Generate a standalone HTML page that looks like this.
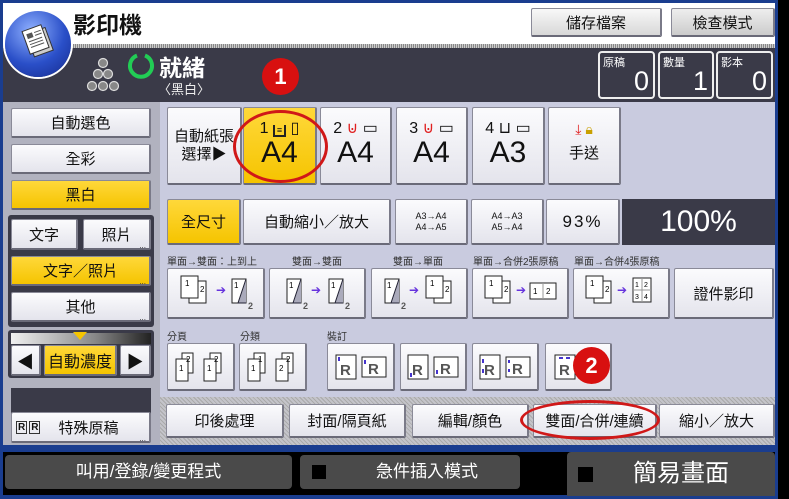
<!DOCTYPE html>
<html><head><meta charset="utf-8"><style>
*{margin:0;padding:0;box-sizing:border-box}
body{width:789px;height:499px;overflow:hidden;background:#000;font-family:"Liberation Sans","Noto Sans CJK TC",sans-serif;position:relative}
.a{position:absolute}
.b{position:absolute;background:linear-gradient(#fbfbfd,#e4e4ec);border:1px solid #8a8a98;border-bottom:2px solid #6a6a78;border-right:2px solid #7a7a88;display:flex;align-items:center;justify-content:center;font-size:15px;color:#111;border-radius:2px}
.y{background:linear-gradient(#ffd83a,#f5c400)}
.lb{position:absolute;font-size:10px;color:#333}
.dots::after{content:"...";position:absolute;right:3px;bottom:-2px;font-size:8px;color:#333}
.cnt{position:absolute;border:2px solid #eee;border-radius:4px;color:#fff;top:51px;height:48px}
.cnt span{position:absolute;left:3px;top:1px;font-size:11px}
.cnt b{position:absolute;right:4px;bottom:0;font-size:27px;font-weight:normal}
svg{display:block}
</style></head><body>
<!-- frame -->
<div class="a" style="left:0;top:0;width:778px;height:452px;background:#1a3d8f"></div>
<div class="a" style="left:3px;top:3px;width:772px;height:41px;background:#fff"></div>
<div class="a" style="left:3px;top:44px;width:772px;height:4px;background:repeating-linear-gradient(90deg,#888 0 1px,#ccc 1px 2px)"></div>
<div class="a" style="left:73px;top:6px;font-size:23px;font-weight:bold;color:#111">影印機</div>
<div class="b" style="left:531px;top:8px;width:131px;height:29px;background:linear-gradient(#f8f8f8,#d8d8d8)">儲存檔案</div>
<div class="b" style="left:671px;top:8px;width:104px;height:29px;background:linear-gradient(#eee,#ccc)">檢查模式</div>
<!-- status -->
<div class="a" style="left:3px;top:48px;width:772px;height:54px;background:#3a3a48"></div>
<div class="a" style="left:5px;top:11px;width:66px;height:66px;border-radius:50%;background:radial-gradient(circle at 40% 30%,#8fb0ff,#2a4fc8 55%,#14288a);box-shadow:0 0 0 2px #fff"></div>
<svg class="a" style="left:20px;top:20px" width="40" height="40" viewBox="0 0 40 40"><g transform="rotate(-20 20 20)"><rect x="9" y="10" width="20" height="24" fill="#ccc" stroke="#333"/><rect x="6" y="6" width="20" height="24" fill="#fff" stroke="#333"/><rect x="9" y="10" width="6" height="5" fill="#555"/><path d="M17 11h7M17 14h7M9 18h14M9 21h14M9 24h14" stroke="#555"/></g></svg>
<svg class="a" style="left:86px;top:57px" width="34" height="40"><g fill="#888" stroke="#ddd" stroke-width="1.2"><circle cx="17" cy="6" r="4.5"/><circle cx="12" cy="17" r="4.5"/><circle cx="22" cy="17" r="4.5"/><circle cx="6" cy="29" r="4.5"/><circle cx="17" cy="29" r="4.5"/><circle cx="28" cy="29" r="4.5"/></g></svg>
<svg class="a" style="left:127px;top:52px" width="28" height="28"><path d="M10 3.5A11 11 0 1 0 18 3.5" fill="none" stroke="#22cc55" stroke-width="4"/></svg>
<div class="a" style="left:159px;top:49px;font-size:23px;color:#fff;font-weight:bold">就緒</div>
<div class="a" style="left:158px;top:79px;font-size:13px;color:#eee">〈黑白〉</div>
<div class="a" style="left:262px;top:58px;width:37px;height:37px;border-radius:50%;background:#d81010;color:#fff;font-size:22px;font-weight:bold;text-align:center;line-height:37px">1</div>
<div class="cnt" style="left:598px;width:57px"><span>原稿</span><b>0</b></div>
<div class="cnt" style="left:658px;width:56px"><span>數量</span><b>1</b></div>
<div class="cnt" style="left:716px;width:57px"><span>影本</span><b>0</b></div>
<!-- main bgs -->
<div class="a" style="left:3px;top:102px;width:157px;height:343px;background:#b1b2bf"></div>
<div class="a" style="left:160px;top:102px;width:615px;height:295px;background:#c9cbdf"></div>
<div class="a" style="left:160px;top:397px;width:615px;height:48px;background:repeating-linear-gradient(45deg,#aaa 0 1px,#c4c4ca 1px 3px)"></div>
<!-- left -->
<div class="b" style="left:11px;top:108px;width:140px;height:30px">自動選色</div>
<div class="b" style="left:11px;top:144px;width:140px;height:30px">全彩</div>
<div class="b y" style="left:11px;top:180px;width:140px;height:30px">黑白</div>
<div class="a" style="left:8px;top:215px;width:146px;height:112px;background:#3a3a48;border-radius:3px"></div>
<div class="b" style="left:11px;top:219px;width:67px;height:31px">文字</div>
<div class="b dots" style="left:83px;top:219px;width:68px;height:31px">照片</div>
<div class="b y dots" style="left:11px;top:256px;width:140px;height:30px">文字／照片</div>
<div class="b dots" style="left:11px;top:292px;width:140px;height:30px">其他</div>
<div class="a" style="left:8px;top:330px;width:146px;height:48px;background:#3a3a48;border-radius:3px"></div>
<div class="a" style="left:11px;top:333px;width:140px;height:11px;background:linear-gradient(90deg,#f0f0f0,#888 60%,#222)"></div>
<div class="a" style="left:73px;top:332px;width:0;height:0;border-left:7px solid transparent;border-right:7px solid transparent;border-top:8px solid #f5c400"></div>
<div class="b" style="left:11px;top:345px;width:30px;height:31px;font-size:17px">◀</div>
<div class="b y" style="left:44px;top:345px;width:73px;height:31px;font-size:16px">自動濃度</div>
<div class="b" style="left:120px;top:345px;width:31px;height:31px;font-size:17px">▶</div>
<div class="a" style="left:11px;top:388px;width:140px;height:26px;background:#3a3a48"></div>
<div class="b dots" style="left:11px;top:412px;width:140px;height:31px;justify-content:flex-start;padding-left:4px"><span style="font-size:10px;border:1px solid #333;padding:0 1px;font-weight:bold">R</span><span style="font-size:10px;border:1px solid #333;padding:0 1px;font-weight:bold;margin-left:2px">R</span><span style="margin-left:18px">特殊原稿</span></div>
<!-- paper row -->
<div class="b" style="left:167px;top:107px;width:75px;height:78px;font-size:15px;line-height:18px;text-align:center">自動紙張<br>選擇▶</div>
<div class="b y" style="left:243px;top:107px;width:74px;height:78px;flex-direction:column"><div style="font-size:16px;margin-top:-6px">1 <span style="border:2px solid #222;border-top:none;font-size:9px;padding:0 2px">≡</span> ▯</div><div style="font-size:30px;line-height:30px">A4</div></div>
<div class="b" style="left:320px;top:107px;width:72px;height:78px;flex-direction:column"><div style="font-size:16px;margin-top:-6px">2 <span style="color:#e02020">⊍</span> ▭</div><div style="font-size:30px;line-height:30px">A4</div></div>
<div class="b" style="left:396px;top:107px;width:72px;height:78px;flex-direction:column"><div style="font-size:16px;margin-top:-6px">3 <span style="color:#e02020">⊍</span> ▭</div><div style="font-size:30px;line-height:30px">A4</div></div>
<div class="b" style="left:472px;top:107px;width:73px;height:78px;flex-direction:column"><div style="font-size:16px;margin-top:-6px">4 ⊔ ▭</div><div style="font-size:30px;line-height:30px">A3</div></div>
<div class="b" style="left:548px;top:107px;width:73px;height:78px;flex-direction:column"><div style="font-size:14px;margin-top:-8px"><span style="color:#e02020">⤓</span> <span style="color:#c9a000">🔒︎</span></div><div style="font-size:15px;margin-top:4px">手送</div></div>
<div class="a" style="left:233px;top:110px;width:95px;height:73px;border:3px solid #d01818;border-radius:50%"></div>
<!-- reduce row -->
<div class="b y" style="left:167px;top:199px;width:74px;height:46px">全尺寸</div>
<div class="b" style="left:243px;top:199px;width:148px;height:46px">自動縮小／放大</div>
<div class="b" style="left:395px;top:199px;width:73px;height:46px;font-size:9px;line-height:11px;text-align:center">A3→A4<br>A4→A5</div>
<div class="b" style="left:471px;top:199px;width:73px;height:46px;font-size:9px;line-height:11px;text-align:center">A4→A3<br>A5→A4</div>
<div class="b" style="left:546px;top:199px;width:74px;height:46px;font-size:17px;letter-spacing:2px">93%</div>
<div class="a" style="left:622px;top:199px;width:153px;height:46px;background:#3a3a48;color:#fff;font-size:30px;text-align:center;line-height:46px">100%</div>
<div class="lb" style="left:167px;top:253px">單面→雙面：上到上</div>
<div class="lb" style="left:292px;top:253px">雙面→雙面</div>
<div class="lb" style="left:393px;top:253px">雙面→單面</div>
<div class="lb" style="left:473px;top:253px">單面→合併2張原稿</div>
<div class="lb" style="left:574px;top:253px">單面→合併4張原稿</div>
<!-- duplex row -->
<div class="b" style="left:167px;top:268px;width:98px;height:51px"><svg width="80" height="40"><rect x="13" y="8" width="17" height="22" fill="#fff" stroke="#222"/><rect x="5" y="3" width="17" height="22" fill="#fff" stroke="#222"/><text x="9" y="13" font-size="8">1</text><text x="24" y="19" font-size="8">2</text><text x="40" y="21" fill="#6633dd" font-size="12">➔</text><path d="M56 6h14v24h-14z" fill="#fff" stroke="#222"/><path d="M70 6l-8 24h8" fill="#aab" stroke="#223"/><text x="58" y="15" font-size="8">1</text><text x="72" y="36" font-size="9" fill="#555" font-weight="bold">2</text></svg></div>
<div class="b" style="left:269px;top:268px;width:97px;height:51px"><svg width="80" height="40"><path d="M10 6h14v24h-14z" fill="#fff" stroke="#222"/><path d="M24 6l-8 24h8" fill="#aab" stroke="#223"/><text x="12" y="15" font-size="8">1</text><text x="26" y="36" font-size="9" fill="#555" font-weight="bold">2</text><text x="34" y="21" fill="#6633dd" font-size="12">➔</text><path d="M52 6h14v24h-14z" fill="#fff" stroke="#222"/><path d="M66 6l-8 24h8" fill="#aab" stroke="#223"/><text x="54" y="15" font-size="8">1</text><text x="68" y="36" font-size="9" fill="#555" font-weight="bold">2</text></svg></div>
<div class="b" style="left:371px;top:268px;width:97px;height:51px"><svg width="80" height="40"><path d="M6 6h14v24h-14z" fill="#fff" stroke="#222"/><path d="M20 6l-8 24h8" fill="#aab" stroke="#223"/><text x="8" y="15" font-size="8">1</text><text x="22" y="36" font-size="9" fill="#555" font-weight="bold">2</text><text x="30" y="21" fill="#6633dd" font-size="12">➔</text><rect x="55" y="8" width="17" height="22" fill="#fff" stroke="#222"/><rect x="47" y="3" width="17" height="22" fill="#fff" stroke="#222"/><text x="51" y="13" font-size="8">1</text><text x="66" y="19" font-size="8">2</text></svg></div>
<div class="b" style="left:472px;top:268px;width:97px;height:51px"><svg width="80" height="40"><rect x="13" y="8" width="17" height="22" fill="#fff" stroke="#222"/><rect x="5" y="3" width="17" height="22" fill="#fff" stroke="#222"/><text x="9" y="13" font-size="8">1</text><text x="24" y="19" font-size="8">2</text><text x="36" y="21" fill="#6633dd" font-size="12">➔</text><rect x="50" y="10" width="26" height="16" fill="#fff" stroke="#222"/><path d="M63 10v16" stroke="#999"/><text x="53" y="21" font-size="8">1</text><text x="66" y="21" font-size="8">2</text></svg></div>
<div class="b" style="left:573px;top:268px;width:97px;height:51px"><svg width="80" height="40"><rect x="13" y="8" width="17" height="22" fill="#fff" stroke="#222"/><rect x="5" y="3" width="17" height="22" fill="#fff" stroke="#222"/><text x="9" y="13" font-size="8">1</text><text x="24" y="19" font-size="8">2</text><text x="36" y="21" fill="#6633dd" font-size="12">➔</text><rect x="52" y="5" width="18" height="24" fill="#fff" stroke="#222"/><path d="M61 5v24M52 17h18" stroke="#999"/><text x="54" y="14" font-size="7">1</text><text x="63" y="14" font-size="7">2</text><text x="54" y="26" font-size="7">3</text><text x="63" y="26" font-size="7">4</text></svg></div>
<div class="b" style="left:674px;top:268px;width:100px;height:51px">證件影印</div>
<div class="lb" style="left:167px;top:328px">分頁</div>
<div class="lb" style="left:240px;top:328px">分類</div>
<div class="lb" style="left:327px;top:328px">裝訂</div>
<div class="b" style="left:167px;top:343px;width:68px;height:48px"><svg width="60" height="34"><g fill="#fff" stroke="#222"><rect x="11" y="3" width="11" height="20"/><rect x="5" y="9" width="12" height="22"/><rect x="39" y="3" width="11" height="20"/><rect x="33" y="9" width="12" height="22"/></g><g font-size="8"><text x="15" y="12">2</text><text x="8" y="21">1</text><text x="43" y="12">2</text><text x="36" y="21">1</text></g></svg></div>
<div class="b" style="left:239px;top:343px;width:68px;height:48px"><svg width="60" height="34"><g fill="#fff" stroke="#222"><rect x="11" y="3" width="11" height="20"/><rect x="5" y="9" width="12" height="22"/><rect x="39" y="3" width="11" height="20"/><rect x="33" y="9" width="12" height="22"/></g><g font-size="8"><text x="15" y="12">1</text><text x="8" y="21">1</text><text x="43" y="12">2</text><text x="36" y="21">2</text></g></svg></div>
<div class="b" style="left:327px;top:343px;width:68px;height:48px"><svg width="60" height="34"><g fill="#fff" stroke="#222"><rect x="5" y="5" width="20" height="24"/><rect x="31" y="7" width="24" height="20"/></g><g font-size="15" font-weight="bold" fill="#555"><text x="9" y="25">R</text><text x="37" y="24">R</text></g><path d="M8 7v4M34 10v4" stroke="#4433cc" stroke-width="2"/></svg></div>
<div class="b" style="left:400px;top:343px;width:67px;height:48px"><svg width="60" height="34"><g fill="#fff" stroke="#222"><rect x="5" y="5" width="20" height="24"/><rect x="31" y="7" width="24" height="20"/></g><g font-size="15" font-weight="bold" fill="#555"><text x="9" y="25">R</text><text x="37" y="24">R</text></g><path d="M8 23v4M34 20v4" stroke="#4433cc" stroke-width="2"/></svg></div>
<div class="b" style="left:472px;top:343px;width:67px;height:48px"><svg width="60" height="34"><g fill="#fff" stroke="#222"><rect x="5" y="5" width="20" height="24"/><rect x="31" y="7" width="24" height="20"/></g><g font-size="15" font-weight="bold" fill="#555"><text x="9" y="25">R</text><text x="37" y="24">R</text></g><path d="M8 9v4M8 19v4M34 10v3M34 19v3" stroke="#4433cc" stroke-width="2"/></svg></div>
<div class="b" style="left:545px;top:343px;width:67px;height:48px;justify-content:flex-start;padding-left:6px"><svg width="26" height="34"><rect x="3" y="5" width="20" height="24" fill="#fff" stroke="#222"/><text x="7" y="25" font-size="15" font-weight="bold" fill="#555">R</text><path d="M7 8h4M14 8h4" stroke="#4433cc" stroke-width="2"/></svg></div>
<div class="a" style="left:573px;top:347px;width:37px;height:37px;border-radius:50%;background:#d81010;color:#fff;font-size:22px;font-weight:bold;text-align:center;line-height:37px">2</div>
<!-- tabs -->
<div class="b" style="left:166px;top:404px;width:118px;height:34px">印後處理</div>
<div class="b" style="left:289px;top:404px;width:117px;height:34px">封面/隔頁紙</div>
<div class="b" style="left:412px;top:404px;width:117px;height:34px">編輯/顏色</div>
<div class="b" style="left:533px;top:404px;width:124px;height:34px">雙面/合併/連續</div>
<div class="b" style="left:659px;top:404px;width:116px;height:34px">縮小／放大</div>
<div class="a" style="left:520px;top:400px;width:140px;height:40px;border:3px solid #d01818;border-radius:50%"></div>
<!-- bottom -->
<div class="a" style="left:0;top:452px;width:789px;height:47px;background:#000"></div>
<div class="a" style="left:0;top:495px;width:778px;height:4px;background:#1a3d8f"></div>
<div class="a" style="left:0;top:452px;width:3px;height:47px;background:#1a3d8f"></div>
<div class="a" style="left:775px;top:0;width:3px;height:499px;background:#1a3d8f"></div>
<div class="a" style="left:5px;top:455px;width:287px;height:34px;background:#4a4a4a;border-radius:4px;color:#fff;font-size:17px;text-align:center;line-height:34px">叫用/登錄/變更程式</div>
<div class="a" style="left:300px;top:455px;width:220px;height:34px;background:#4a4a4a;border-radius:4px;color:#fff;font-size:17px;line-height:34px"><span style="display:inline-block;width:14px;height:14px;background:#000;margin:0 50px 0 12px;vertical-align:-2px"></span>急件插入模式</div>
<div class="a" style="left:567px;top:452px;width:208px;height:44px;background:#4a4a4a;border-radius:4px 4px 0 0;color:#fff;font-size:24px;line-height:44px"><span style="display:inline-block;width:15px;height:15px;background:#000;margin:0 40px 0 11px;vertical-align:-1px"></span>簡易畫面</div>
</body></html>
